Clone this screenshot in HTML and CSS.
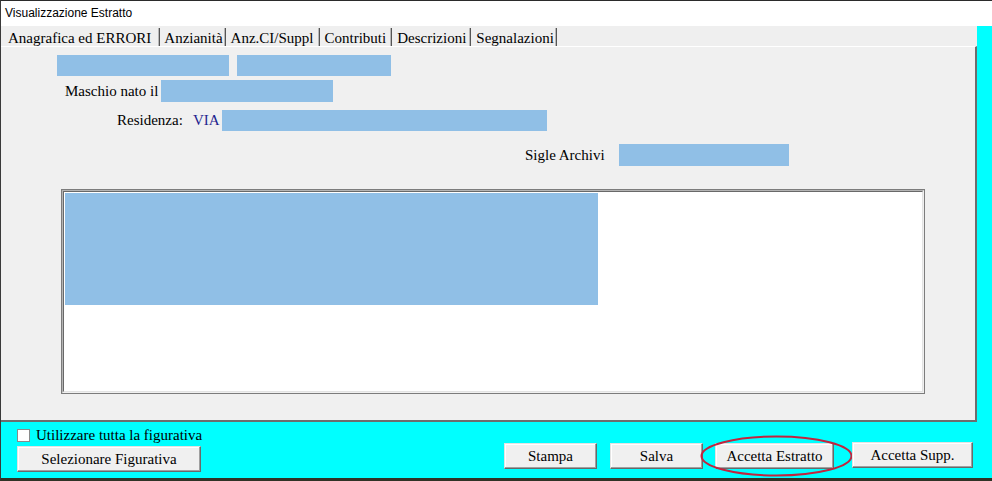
FILE: index.html
```html
<!DOCTYPE html>
<html lang="it">
<head>
    <meta charset="UTF-8">
    <title>Visualizzazione Estratto</title>
    <link rel="stylesheet" href="styles.css">
</head>
<body>
    <div class="window">
        <!-- barra del titolo -->
        <div class="titlebar">Visualizzazione Estratto</div>

        <!-- schede -->
        <div class="tabs">
            <div class="tab active">Anagrafica ed ERRORI</div>
            <div class="tab tab-narrow">Anzianità</div>
            <div class="tab">Anz.CI/Suppl</div>
            <div class="tab">Contributi</div>
            <div class="tab tab-tight">Descrizioni</div>
            <div class="tab tab-last">Segnalazioni</div>
        </div>

        <!-- pagina Anagrafica -->
        <div class="panel">
            <div class="row row-ids">
                <span class="field f-cognome"></span>
                <span class="field f-nome"></span>
            </div>
            <div class="row row-nascita">
                <span class="label l-nascita">Maschio nato il</span>
                <span class="field f-nascita"></span>
            </div>
            <div class="row row-residenza">
                <span class="label l-residenza">Residenza:</span>
                <span class="label l-via">VIA</span>
                <span class="field f-via"></span>
            </div>
            <div class="row row-sigle">
                <span class="label l-sigle">Sigle Archivi</span>
                <span class="field f-sigle"></span>
            </div>
            <div class="listbox">
                <div class="listbox-mid">
                    <div class="listbox-inner">
                        <div class="selection"></div>
                    </div>
                </div>
            </div>
        </div>

        <!-- comandi -->
        <div class="footer">
            <div class="footer-left">
                <label class="check"><span class="box"></span>Utilizzare tutta la figurativa</label>
                <button type="button" class="btn btn-figurativa">Selezionare Figurativa</button>
            </div>
            <div class="footer-right">
                <button type="button" class="btn btn-stampa">Stampa</button>
                <button type="button" class="btn btn-salva">Salva</button>
                <button type="button" class="btn btn-accetta">Accetta Estratto
                    <svg class="circle" width="153" height="42" viewBox="0 0 153 42">
                        <ellipse cx="76.5" cy="21" rx="75" ry="19.5" fill="none" stroke="#c2243e" stroke-width="2"/>
                    </svg>
                </button>
                <button type="button" class="btn btn-supp">Accetta Supp.</button>
            </div>
        </div>
    </div>
</body>
</html>
```

FILE: styles.css
```css
body {
    margin: 0;
    background-color: #00ffff;
    font-family: "Liberation Serif", "Times New Roman", serif;
    font-size: 15px;
    color: #000;
}

.window {
    height: 481px;
    display: flex;
    flex-direction: column;
    border-top: 1px solid #2b2b2b;
    border-left: 1px solid #3a3a3a;
    border-bottom: 3px solid #2f3326;
    box-sizing: border-box;
}

.titlebar {
    height: 25px;
    line-height: 25px;
    padding-left: 4px;
    background-color: #fff;
    font-family: "Liberation Sans", Arial, sans-serif;
    font-size: 12px;
}

.tabs {
    width: 976px;
    height: 20px;
    background-color: #efefef;
    display: flex;
    align-items: flex-end;
}

.tab {
    height: 18px;
    line-height: 21px;
    padding: 0 5px;
    overflow: hidden;
    white-space: nowrap;
    border-right: 1px solid #555;
    box-shadow: inset -1px 0 #b8b8b8;
}

.tab.active {
    padding: 0 8px 0 7px;
}

.tab-narrow {
    padding: 0 2px 0 4px;
}

.tab-tight {
    padding: 0 4px 0 5px;
}

.tab-last {
    padding-right: 2px;
}

.panel {
    width: 976px;
    height: 376px;
    box-sizing: border-box;
    background-color: #f0f0f0;
    border-top: 1px solid #fff;
    border-right: 2px solid #6d6d6d;
    border-bottom: 2px solid #6d6d6d;
    display: flex;
    flex-direction: column;
}

.row {
    display: flex;
    align-items: center;
}

.field {
    display: block;
    height: 21px;
    background-color: #90bfe6;
}

.label {
    white-space: nowrap;
}

.row-ids {
    margin-top: 8px;
    padding-left: 56px;
    gap: 8px;
}

.f-cognome { width: 172px; }
.f-nome { width: 154px; }

.row-nascita {
    margin-top: 4px;
    padding-left: 64px;
}

.l-nascita { width: 96px; }
.f-nascita { width: 172px; height: 22px; }

.row-residenza {
    margin-top: 8px;
    padding-left: 116px;
}

.l-residenza { width: 76px; }
.l-via { width: 29px; color: #1f1f8f; }
.f-via { width: 325px; }

.row-sigle {
    margin-top: 13px;
    padding-left: 524px;
}

.l-sigle { width: 94px; }
.f-sigle { width: 170px; height: 22px; }

/* riquadro con bordo incassato */
.listbox {
    margin: 23px 0 0 60px;
    width: 864px;
    height: 205px;
    box-sizing: border-box;
    border: 1px solid #7c7c7c;
}

.listbox-mid {
    height: 100%;
    box-sizing: border-box;
    border: 1px solid;
    border-color: #b4b4b4 #f0f0f0 #f0f0f0 #b4b4b4;
}

.listbox-inner {
    height: 100%;
    box-sizing: border-box;
    padding: 1px;
    background-color: #fff;
    border: 1px solid;
    border-color: #696969 #e3e3e3 #e3e3e3 #696969;
}

.selection {
    width: 533px;
    height: 112px;
    background-color: #90bfe6;
}

.footer {
    height: 56px;
    display: flex;
    justify-content: space-between;
}

.footer-left {
    padding: 6px 0 0 16px;
    display: flex;
    flex-direction: column;
}

.check {
    display: flex;
    align-items: center;
    gap: 6px;
    height: 14px;
    line-height: 14px;
}

.box {
    width: 11px;
    height: 11px;
    background-color: #fff;
    border: 1px solid #8a8a8a;
}

.btn {
    position: relative;
    height: 26px;
    padding: 0;
    box-sizing: border-box;
    font-family: inherit;
    font-size: 15px;
    color: #000;
    background-color: #f0f0f0;
    border: 1px solid;
    border-color: #e3e3e3 #696969 #696969 #e3e3e3;
    box-shadow: inset -1px -1px #a0a0a0, inset 1px 1px #fff;
}

.btn-figurativa {
    width: 184px;
    margin-top: 4px;
}

.footer-right {
    display: flex;
    align-items: flex-start;
    padding: 21px 19px 0 0;
}

.btn-stampa { width: 93px; }
.btn-salva { width: 93px; margin-left: 13px; }
.btn-accetta { width: 119px; margin-left: 12px; }
.btn-supp { width: 121px; margin-left: 18px; margin-top: -1px; }

.circle {
    position: absolute;
    left: -16px;
    top: -9px;
    overflow: visible;
    pointer-events: none;
}
```
